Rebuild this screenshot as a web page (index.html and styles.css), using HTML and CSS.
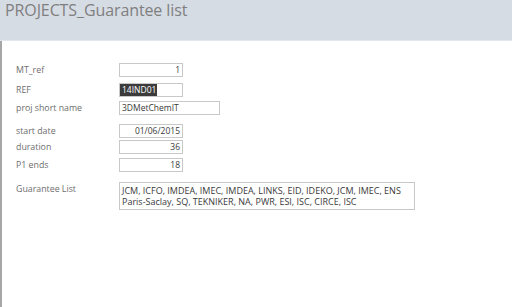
FILE: index.html
```html
<!DOCTYPE html>
<html>
<head>
<meta charset="utf-8">
<link rel="stylesheet" href="styles.css">
</head>
<body>
<header class="header">
  <h1 class="title">PROJECTS_Guarantee list</h1>
</header>
<main class="detail">
  <div class="form">
    <div class="label">MT_ref</div>
    <div class="field"><div class="box num">1</div></div>

    <div class="label">REF</div>
    <div class="field"><div class="box"><span class="sel">14IND01</span></div></div>

    <div class="label">proj short name</div>
    <div class="field"><div class="box wide">3DMetChemIT</div></div>

    <div class="label">start date</div>
    <div class="field"><div class="box num">01/06/2015</div></div>

    <div class="label">duration</div>
    <div class="field"><div class="box num">36</div></div>

    <div class="label">P1 ends</div>
    <div class="field"><div class="box num">18</div></div>

    <div class="label">Guarantee List</div>
    <div class="field"><div class="box memo">JCM, ICFO, IMDEA, IMEC, IMDEA, LINKS, EID, IDEKO, JCM, IMEC, ENS Paris-Saclay, SQ, TEKNIKER, NA, PWR, ESI, ISC, CIRCE, ISC</div></div>
  </div>
</main>
</body>
</html>
```

FILE: styles.css
```css
html, body {
  margin: 0;
  padding: 0;
  background: #ffffff;
  height: 100%;
}
body {
  font-family: "Open Sans", "Liberation Sans", sans-serif;
  display: flex;
  flex-direction: column;
}
.header {
  height: 40px;
  background: #d6dce4;
  border-bottom: 1px solid #e2e6ee;
  flex: none;
}
.title {
  margin: 0;
  padding: 0 0 0 5px;
  font-weight: normal;
  font-size: 16px;
  line-height: 21px;
  color: #7f7f7f;
  letter-spacing: -0.1px;
}
.detail {
  flex: 1;
  border-left: 2px solid #a6a6a6;
  padding: 22px 0 0 14px;
}
.form {
  display: grid;
  grid-template-columns: 103px auto;
  grid-template-rows: 20px 18px 23px 16px 18px 24px 28px;
  align-items: start;
}
.label {
  font-size: 8.8px;
  line-height: 14px;
  color: #6e6e6e;
  white-space: nowrap;
}
.box {
  box-sizing: border-box;
  width: 64px;
  height: 14px;
  border: 1px solid #c8c8c8;
  font-size: 8.5px;
  line-height: 12px;
  color: #3a3a3a;
  padding: 0 2px;
  white-space: nowrap;
  overflow: hidden;
  background: #fff;
}
.num {
  text-align: right;
}
.wide {
  width: 101px;
}
.sel {
  display: inline-block;
  background: #3b3b3b;
  color: #ffffff;
  margin-left: -2px;
  padding: 0 1px 0 2px;
  height: 12px;
}
.memo {
  width: 296px;
  height: 28px;
  white-space: normal;
  font-size: 9px;
  line-height: 11px;
  padding: 2px 2px;
}
```
